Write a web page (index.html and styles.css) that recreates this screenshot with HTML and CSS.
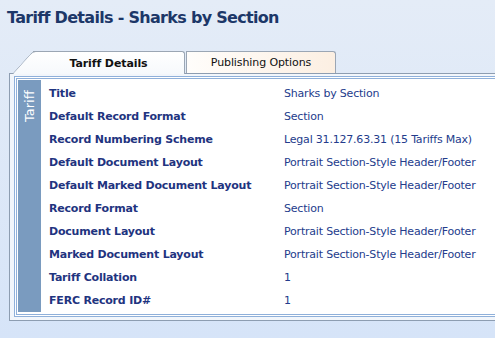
FILE: index.html
```html
<!DOCTYPE html>
<html lang="en">
  <head>
    <meta charset="UTF-8" />
    <meta name="viewport" content="width=device-width, initial-scale=1.0" />
    <title>Tariff Details</title>
    <link rel="stylesheet" href="styles.css">
  </head>

  <body>
    <h1 class="page-title">Tariff Details - Sharks by Section</h1>

    <div class="tabs">
      <div class="tab tab-active">Tariff Details</div>
      <div class="tab">Publishing Options</div>
    </div>

    <div class="panel">
      <div class="panel-inner">
        <div class="side-bar"><span>Tariff</span></div>
        <div class="details">
          <div class="label">Title</div>
          <div class="value">Sharks by Section</div>
          <div class="label">Default Record Format</div>
          <div class="value">Section</div>
          <div class="label">Record Numbering Scheme</div>
          <div class="value">Legal 31.127.63.31 (15 Tariffs Max)</div>
          <div class="label">Default Document Layout</div>
          <div class="value">Portrait Section-Style Header/Footer</div>
          <div class="label">Default Marked Document Layout</div>
          <div class="value">Portrait Section-Style Header/Footer</div>
          <div class="label">Record Format</div>
          <div class="value">Section</div>
          <div class="label">Document Layout</div>
          <div class="value">Portrait Section-Style Header/Footer</div>
          <div class="label">Marked Document Layout</div>
          <div class="value">Portrait Section-Style Header/Footer</div>
          <div class="label">Tariff Collation</div>
          <div class="value">1</div>
          <div class="label">FERC Record ID#</div>
          <div class="value">1</div>
        </div>
      </div>
    </div>
  </body>
</html>
```

FILE: styles.css
```css
html,
body {
  margin: 0;
  height: 100%;
  overflow: hidden;
}

body {
  font-family: "DejaVu Sans", Tahoma, sans-serif;
  font-size: 11px;
  background: linear-gradient(to bottom, #e4ecf7, #d6e4f8);
}

.page-title {
  margin: 0;
  padding: 8px 7px 0;
  height: 51px;
  box-sizing: border-box;
  font-size: 16px;
  letter-spacing: -0.7px;
  font-weight: bold;
  color: #1c3768;
}

.tabs {
  display: flex;
  margin-left: 33px;
  height: 22px;
}

.tab {
  box-sizing: border-box;
  display: flex;
  align-items: center;
  justify-content: center;
  width: 150px;
  height: 22px;
  border: 1px solid #9ba6b4;
  border-bottom: none;
  border-top-right-radius: 3px;
  background: linear-gradient(to right, #fffdfb, #fcefe2);
  color: #111;
  letter-spacing: -0.1px;
}

.tab-active {
  position: relative;
  width: 152px;
  margin-right: 1px;
  border-left: none;
  background: linear-gradient(to bottom, #ffffff, #f6f9fc);
  font-weight: bold;
  z-index: 1;
  height: 23px;
}

.tab-active::before {
  content: "";
  position: absolute;
  left: -21px;
  top: -1px;
  bottom: 0;
  width: 30px;
  background: linear-gradient(to bottom, #ffffff, #f6f9fc);
  border-top: 1px solid #9ba6b4;
  border-left: 1px solid #9ba6b4;
  border-top-left-radius: 4px;
  transform-origin: bottom left;
  transform: skewX(-42deg);
  z-index: -1;
}

.panel {
  margin-left: 9px;
  border: 1px solid #8d9db1;
  border-right: none;
  background: #f2f6fb;
  padding: 2px 0 3px 4px;
}

.panel-inner {
  display: flex;
  border: 3px double #8fb0da;
  border-right: none;
  background: #ffffff;
  padding: 1px 0 2px 1px;
}

.side-bar {
  width: 23px;
  background: #7a9bbf;
  display: flex;
  justify-content: center;
  padding-top: 8px;
}

.side-bar span {
  writing-mode: vertical-rl;
  transform: rotate(180deg);
  color: #ffffff;
  font-size: 13px;
  height: 34px;
}

.details {
  display: grid;
  grid-template-columns: 235px 1fr;
  grid-auto-rows: 23px;
  align-items: center;
  padding: 2px 0 0 8px;
}

.label {
  font-weight: bold;
  color: #1f3480;
  letter-spacing: -0.2px;
}

.value {
  color: #243c8c;
  letter-spacing: -0.2px;
}
```
